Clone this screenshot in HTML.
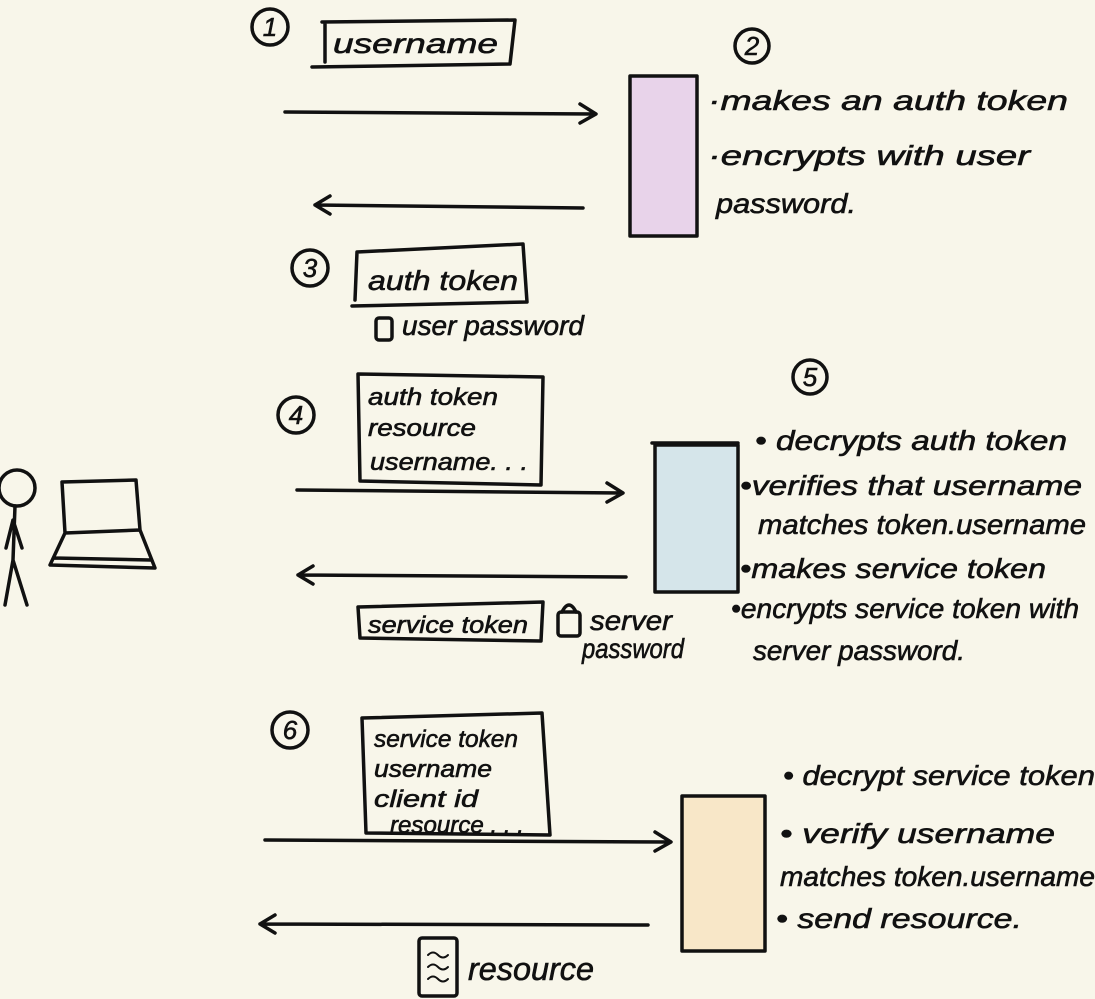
<!DOCTYPE html>
<html><head><meta charset="utf-8"><style>
html,body{margin:0;padding:0;background:#f8f6ea;}
svg{display:block}
text{font-family:"Liberation Sans",sans-serif;fill:#111;font-style:italic;stroke:#111;stroke-width:0.6}
</style></head><body>
<svg width="1095" height="999" viewBox="0 0 1095 999" xmlns="http://www.w3.org/2000/svg">
<rect width="1095" height="999" fill="#f8f6ea"/>
<g fill="none" stroke="#111" stroke-width="3.5" stroke-linecap="round" stroke-linejoin="round">
<circle cx="270" cy="27" r="18"/>
<path d="M322 22 L515 20 L510 64 L312 67 M325 22 L325 62"/>
<circle cx="752" cy="46" r="17"/>
<path d="M285 112 L595 114 M580 104 L596 114 L580 123"/>
<rect x="630" y="76" width="67" height="160" fill="#e8d3ea"/>
<path d="M583 208 L315 205 M330 196 L315 205 L330 214"/>
<circle cx="310" cy="268" r="18"/>
<path d="M357 252 L523 244 L527 302 L352 306 M357 252 L355 300"/>
<rect x="376" y="318" width="16" height="22" rx="3"/>
<circle cx="296" cy="415" r="18"/>
<path d="M358 374 L543 377 L541 485 L360 481 Z"/>
<circle cx="810" cy="377" r="17"/>
<path d="M297 490 L622 493 M607 483 L623 493 L607 502"/>
<rect x="655" y="445" width="83" height="147" fill="#d5e5ea"/>
<path d="M652 443 L738 443"/>
<path d="M626 577 L298 575 M313 566 L298 575 L313 584"/>
<path d="M358 607 L543 602 L541 641 L360 638 Z"/>
<rect x="558" y="612" width="22" height="24" rx="3"/>
<path d="M562 612 Q569 598 576 612"/>
<circle cx="17" cy="488" r="18"/>
<path d="M15 506 L13 560 L5 605 M13 560 L27 605 M13 520 L6 548 M13 520 L22 548"/>
<path d="M62 482 L136 480 L140 530 L65 533 Z M65 533 L50 565 L155 568 L140 530 M54 558 L150 560"/>
<circle cx="290" cy="730" r="18"/>
<path d="M362 718 L542 713 L550 835 L366 833 Z"/>
<path d="M265 840 L670 842 M655 832 L671 842 L655 851"/>
<rect x="682" y="796" width="83" height="155" fill="#f8e7c8"/>
<path d="M648 925 L260 924 M275 915 L260 924 L275 933"/>
<rect x="419" y="938" width="38" height="58" rx="3"/>
<path d="M428 955 Q433 950 438 955 T448 955 M428 967 Q433 962 438 967 T448 967 M428 979 Q433 974 438 979 T448 979" stroke-width="2"/>
</g>
<g font-size="28">
<text x="333" y="53" textLength="165" lengthAdjust="spacingAndGlyphs">username</text>
<text x="708" y="110" textLength="360" lengthAdjust="spacingAndGlyphs">·makes an auth token</text>
<text x="708" y="165" textLength="322" lengthAdjust="spacingAndGlyphs">·encrypts with user</text>
<text x="716" y="213" textLength="140" lengthAdjust="spacingAndGlyphs">password.</text>
<text x="368" y="290" textLength="150" lengthAdjust="spacingAndGlyphs">auth token</text>
<text x="402" y="335" textLength="182" lengthAdjust="spacingAndGlyphs">user password</text>
<text x="368" y="405" font-size="24" textLength="130" lengthAdjust="spacingAndGlyphs">auth token</text>
<text x="368" y="436" font-size="24" textLength="108" lengthAdjust="spacingAndGlyphs">resource</text>
<text x="370" y="470" font-size="24" textLength="158" lengthAdjust="spacingAndGlyphs">username. . .</text>
<text x="755" y="450" textLength="312" lengthAdjust="spacingAndGlyphs">• decrypts auth token</text>
<text x="740" y="495" textLength="342" lengthAdjust="spacingAndGlyphs">•verifies that username</text>
<text x="758" y="534" textLength="328" lengthAdjust="spacingAndGlyphs">matches token.username</text>
<text x="740" y="578" textLength="306" lengthAdjust="spacingAndGlyphs">•makes service token</text>
<text x="731" y="618" textLength="348" lengthAdjust="spacingAndGlyphs">•encrypts service token with</text>
<text x="753" y="660" textLength="212" lengthAdjust="spacingAndGlyphs">server password.</text>
<text x="368" y="633" font-size="24" textLength="160" lengthAdjust="spacingAndGlyphs">service token</text>
<text x="590" y="630" textLength="82" lengthAdjust="spacingAndGlyphs">server</text>
<text x="582" y="658" textLength="102" lengthAdjust="spacingAndGlyphs">password</text>
<text x="374" y="747" font-size="24" textLength="144" lengthAdjust="spacingAndGlyphs">service token</text>
<text x="374" y="777" font-size="24" textLength="118" lengthAdjust="spacingAndGlyphs">username</text>
<text x="374" y="807" font-size="24" textLength="104" lengthAdjust="spacingAndGlyphs">client id</text>
<text x="390" y="833" font-size="24" textLength="134" lengthAdjust="spacingAndGlyphs">resource . . .</text>
<text x="783" y="785" textLength="312" lengthAdjust="spacingAndGlyphs">• decrypt service token</text>
<text x="780" y="843" textLength="275" lengthAdjust="spacingAndGlyphs">• verify username</text>
<text x="780" y="886" textLength="315" lengthAdjust="spacingAndGlyphs">matches token.username</text>
<text x="776" y="928" textLength="246" lengthAdjust="spacingAndGlyphs">• send resource.</text>
<text x="468" y="980" font-size="32" textLength="126" lengthAdjust="spacingAndGlyphs">resource</text>
</g>
<g font-size="26" text-anchor="middle" font-style="normal">
<text x="270" y="36">1</text><text x="752" y="55">2</text><text x="310" y="277">3</text>
<text x="296" y="424">4</text><text x="810" y="386">5</text><text x="290" y="739">6</text>
</g>
</svg>
</body></html>
